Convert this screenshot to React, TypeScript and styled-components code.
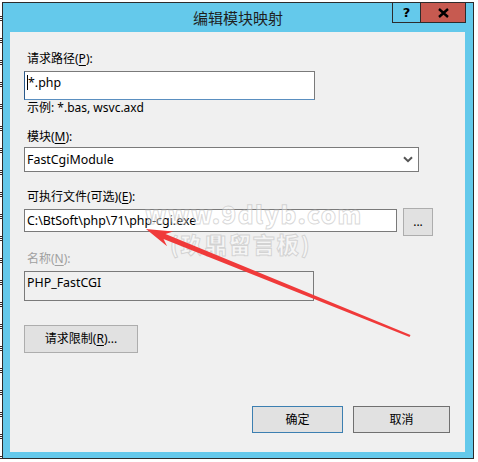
import React from "react";
import styled, { createGlobalStyle } from "styled-components";

const GlobalStyle = createGlobalStyle`
  html, body { margin: 0; padding: 0; background: #ffffff; }
  body { font-family: "Noto Sans", "Noto Sans CJK SC", sans-serif; font-size: 12px; color: #000; }
  * { box-sizing: border-box; }
`;

const Page = styled.div`
  position: relative;
  width: 478px;
  height: 462px;
  display: flex;
  padding-top: 2px;
  overflow: hidden;
`;

const EdgeStrip = styled.div`
  width: 2px;
  height: 457px;
  background: repeating-linear-gradient(
    to bottom,
    #ffffff 0px, #ffffff 14px,
    #3a2a2a 14px, #3a2a2a 15px,
    #ffffff 15px, #ffffff 16px,
    #3a2a2a 16px, #3a2a2a 17px,
    #ffffff 17px, #ffffff 18px,
    #3a2a2a 18px, #3a2a2a 19px,
    #ffffff 19px, #ffffff 22px
  );
`;

const Window = styled.div`
  width: 472px;
  height: 457px;
  border: 1px solid #2c2c2c;
  background: #64c9eb;
  display: flex;
  flex-direction: column;
`;

const TitleBar = styled.div`
  height: 29px;
  display: grid;
  grid-template-columns: 1fr auto 1fr;
  align-items: start;
`;

const Title = styled.div`
  grid-column: 2;
  align-self: center;
  font-family: "Noto Sans CJK SC", sans-serif;
  font-size: 15px;
  line-height: 20px;
  color: #1e1e1e;
`;

const CaptionGroup = styled.div`
  grid-column: 3;
  justify-self: end;
  display: flex;
  margin-top: -1px;
  margin-right: 7px;
  border: 1px solid #2c2c2c;
  height: 21px;
`;

const CaptionButton = styled.div<{ $close?: boolean }>`
  width: ${(p) => (p.$close ? 44 : 28)}px;
  height: 100%;
  display: flex;
  align-items: center;
  justify-content: center;
  background: ${(p) => (p.$close ? "#c75a50" : "transparent")};
  border-right: ${(p) => (p.$close ? "none" : "1px solid #2c2c2c")};
  font-family: "DejaVu Sans", sans-serif;
  font-weight: bold;
  font-size: 13px;
  color: #000;
`;

const Content = styled.div`
  flex: 1;
  margin: 0 8px 6px 7px;
  background: #f0f0f0;
  display: flex;
  flex-direction: column;
  align-items: flex-start;
  padding: 0 15px 0 14px;
`;

const Label = styled.div<{ $mt?: number; $disabled?: boolean }>`
  margin-top: ${(p) => p.$mt ?? 0}px;
  padding-left: 3px;
  height: 16px;
  line-height: 16px;
  font-size: 12px;
  font-family: "Noto Sans", "Noto Sans CJK SC", sans-serif;
  color: ${(p) => (p.$disabled ? "#a0a0a0" : "#000")};
  white-space: nowrap;
  u { text-decoration-thickness: 1px; text-underline-offset: 2px; }
`;

const TextBox = styled.div<{ $w: number; $h: number; $mt?: number; $focus?: boolean; $disabled?: boolean; $top?: boolean }>`
  margin-top: ${(p) => p.$mt ?? 0}px;
  width: ${(p) => p.$w}px;
  height: ${(p) => p.$h}px;
  border: 1px solid #7a7a7a;
  border-left-color: ${(p) => (p.$focus ? "#2a5a8c" : "#7a7a7a")};
  border-bottom-color: ${(p) => (p.$focus ? "#5a8fc0" : "#7a7a7a")};
  background: ${(p) => (p.$disabled ? "#f0f0f0" : "#ffffff")};
  padding: ${(p) => (p.$top ? "3px 2px 0" : "0 2px")};
  display: flex;
  align-items: ${(p) => (p.$top ? "flex-start" : "center")};
  font-size: 12.4px;
  line-height: 16px;
  white-space: nowrap;
  flex-shrink: 0;
`;

const Caret = styled.span`
  display: inline-block;
  width: 1px;
  height: 15px;
  background: #000;
  vertical-align: middle;
`;

const Select = styled.div<{ $mt?: number }>`
  margin-top: ${(p) => p.$mt ?? 0}px;
  width: 395px;
  height: 25px;
  border: 1px solid #7a7a7a;
  background: #ffffff;
  display: flex;
  align-items: center;
  justify-content: space-between;
  padding: 0 5px 0 2px;
  font-size: 12.4px;
  line-height: 16px;
`;

const Row = styled.div<{ $mt?: number }>`
  margin-top: ${(p) => p.$mt ?? 0}px;
  display: flex;
  align-items: flex-start;
  gap: 6px;
`;

const Button = styled.div<{ $w: number; $h: number; $mt?: number; $default?: boolean; $dark?: boolean }>`
  margin-top: ${(p) => p.$mt ?? 0}px;
  width: ${(p) => p.$w}px;
  height: ${(p) => p.$h}px;
  background: #e1e1e1;
  border: 1px solid ${(p) => (p.$default ? "#3c7fb1" : p.$dark ? "#707070" : "#adadad")};
  display: flex;
  align-items: center;
  justify-content: center;
  font-size: 12px;
  line-height: 16px;
  color: #000;
  white-space: nowrap;
  u { text-decoration-thickness: 1px; text-underline-offset: 2px; }
`;

const Footer = styled.div`
  margin-top: 53px;
  align-self: stretch;
  display: flex;
  justify-content: flex-end;
  gap: 10px;
`;

const Overlay = styled.svg`
  position: absolute;
  left: 0;
  top: 0;
  pointer-events: none;
`;

const Watermark = styled.div<{ $x: number; $y: number; $size: number; $ls: number }>`
  position: absolute;
  left: ${(p) => p.$x}px;
  top: ${(p) => p.$y}px;
  font-family: "Noto Sans CJK SC", sans-serif;
  font-weight: 900;
  font-size: ${(p) => p.$size}px;
  line-height: 1;
  letter-spacing: ${(p) => p.$ls}px;
  color: rgba(255, 255, 255, 0.35);
  -webkit-text-stroke: 1px rgba(185, 185, 185, 0.55);
  white-space: nowrap;
  pointer-events: none;
`;

export default function App() {
  return (
    <>
      <GlobalStyle />
      <Page>
        <EdgeStrip />
        <Window>
          <TitleBar>
            <Title>编辑模块映射</Title>
            <CaptionGroup>
              <CaptionButton>?</CaptionButton>
              <CaptionButton $close>
                <svg width="11" height="10" viewBox="0 0 11 10">
                  <path d="M1 1 L10 9 M10 1 L1 9" stroke="#000" strokeWidth="2.4" />
                </svg>
              </CaptionButton>
            </CaptionGroup>
          </TitleBar>
          <Content>
            <Label $mt={19}>
              请求路径(<u>P</u>):
            </Label>
            <TextBox $w={291} $h={29} $mt={4} $focus $top>
              <Caret />
              *.php
            </TextBox>
            <Label>示例: *.bas, wsvc.axd</Label>
            <Label $mt={13}>
              模块(<u>M</u>):
            </Label>
            <Select $mt={2}>
              <span>FastCgiModule</span>
              <svg width="10" height="7" viewBox="0 0 10 7">
                <path d="M1 1.2 L5 5.2 L9 1.2" fill="none" stroke="#555" strokeWidth="2" />
              </svg>
            </Select>
            <Label $mt={17}>
              可执行文件(可选)(<u>E</u>):
            </Label>
            <Row $mt={3}>
              <TextBox $w={373} $h={23} $mt={1}>
                C:\BtSoft\php\71\php-cgi.exe
              </TextBox>
              <Button $w={30} $h={28}>...</Button>
            </Row>
            <Label $mt={15} $disabled>
              名称(<u>N</u>):
            </Label>
            <TextBox $w={290} $h={30} $mt={4} $disabled $top>
              PHP_FastCGI
            </TextBox>
            <Button $w={114} $h={28} $mt={24}>
              请求限制(<u>R</u>)...
            </Button>
            <Footer>
              <Button $w={91} $h={27} $default>确定</Button>
              <Button $w={97} $h={27} $dark>取消</Button>
            </Footer>
          </Content>
        </Window>
        <Watermark $x={145} $y={202} $size={24} $ls={1.5}>www.9dlyb.com</Watermark>
        <Watermark $x={170} $y={232} $size={22} $ls={2}>(玖鼎留言板)</Watermark>
        <Overlay width="478" height="462" viewBox="0 0 478 462">
          <polygon
            points="146,229 173.1,231.4 165.5,234.1 410.5,334.9 409.5,337.1 163.5,238.9 167.1,246.2"
            fill="#f03a3a"
          />
        </Overlay>
      </Page>
    </>
  );
}
